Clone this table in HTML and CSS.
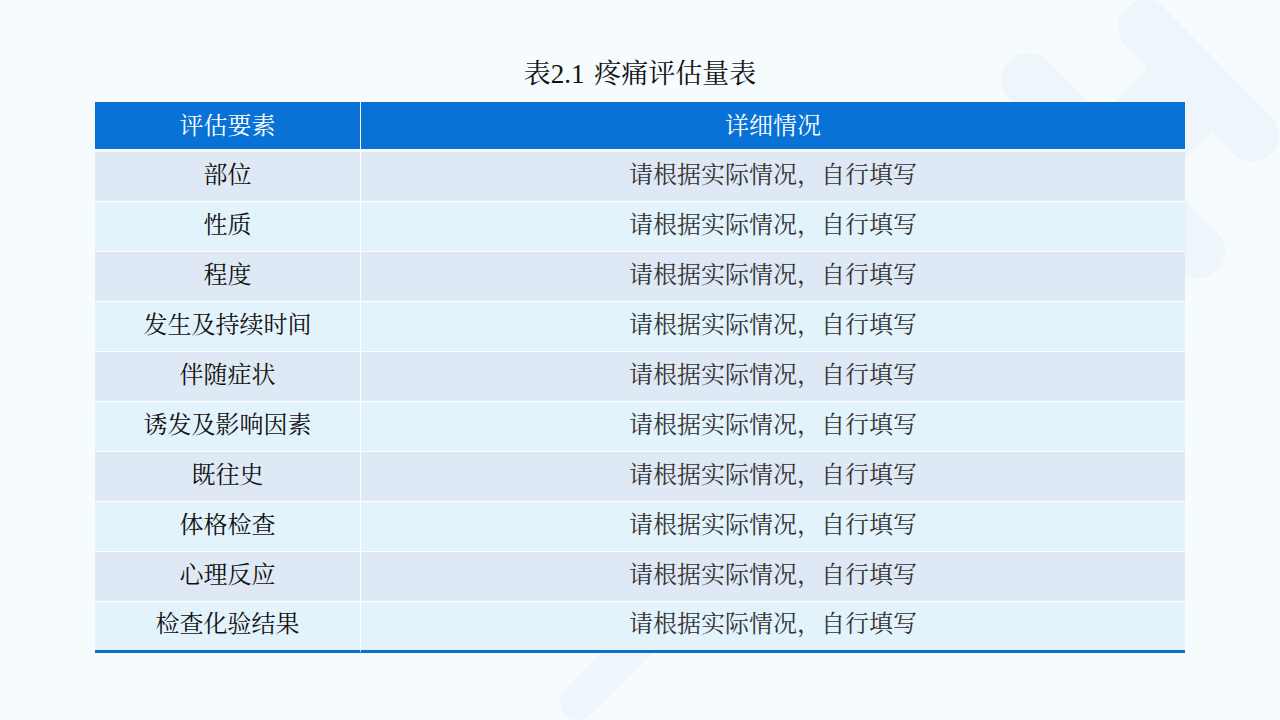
FILE: index.html
```html
<!DOCTYPE html>
<html lang="zh-CN">
<head>
<meta charset="utf-8">
<title>表2.1 疼痛评估量表</title>
<link rel="stylesheet" href="styles.css">
</head>
<body>
<div class="slide">
  <svg class="decor" width="1280" height="720" viewBox="0 0 1280 720" aria-hidden="true">
    <g stroke="#eef6fc" fill="none">
      <line x1="1145" y1="27" x2="1252" y2="135" stroke-width="54" stroke-linecap="round"/>
      <line x1="1028" y1="80" x2="1198" y2="251" stroke-width="54" stroke-linecap="round"/>
      <line x1="1199" y1="81" x2="1000" y2="280" stroke-width="90" stroke-linecap="butt"/>
      <line x1="1114" y1="166" x2="578" y2="702" stroke-width="36" stroke-linecap="round"/>
    </g>
  </svg>
  <main class="content">
    <h1 class="title">表2.1 疼痛评估量表</h1>
    <table class="grid">
      <thead>
        <tr><th class="c1">评估要素</th><th class="c2">详细情况</th></tr>
      </thead>
      <tbody>
        <tr class="odd"><td class="c1">部位</td><td class="c2">请根据实际情况，自行填写</td></tr>
        <tr class="even"><td class="c1">性质</td><td class="c2">请根据实际情况，自行填写</td></tr>
        <tr class="odd"><td class="c1">程度</td><td class="c2">请根据实际情况，自行填写</td></tr>
        <tr class="even"><td class="c1">发生及持续时间</td><td class="c2">请根据实际情况，自行填写</td></tr>
        <tr class="odd"><td class="c1">伴随症状</td><td class="c2">请根据实际情况，自行填写</td></tr>
        <tr class="even"><td class="c1">诱发及影响因素</td><td class="c2">请根据实际情况，自行填写</td></tr>
        <tr class="odd"><td class="c1">既往史</td><td class="c2">请根据实际情况，自行填写</td></tr>
        <tr class="even"><td class="c1">体格检查</td><td class="c2">请根据实际情况，自行填写</td></tr>
        <tr class="odd"><td class="c1">心理反应</td><td class="c2">请根据实际情况，自行填写</td></tr>
        <tr class="even last"><td class="c1">检查化验结果</td><td class="c2">请根据实际情况，自行填写</td></tr>
      </tbody>
    </table>
  </main>
</div>
</body>
</html>
```

FILE: styles.css
```css
html, body {
  margin: 0;
  padding: 0;
}
body {
  width: 1280px;
  height: 720px;
  overflow: hidden;
  background: #f6fbfe;
  font-family: "Liberation Serif", "Noto Serif CJK SC", "Noto Sans CJK SC", serif;
}
.slide {
  position: relative;
  width: 1280px;
  height: 720px;
}
.decor {
  position: absolute;
  left: 0;
  top: 0;
  z-index: 0;
}
.content {
  position: relative;
  z-index: 1;
  display: flex;
  flex-direction: column;
  align-items: center;
  padding-top: 54px;
}
.title {
  margin: 0 0 8px 0;
  height: 40px;
  line-height: 40px;
  font-size: 27px;
  font-weight: normal;
  color: #111;
  word-spacing: 3px;
}
.grid {
  width: 1090px;
  border-collapse: separate;
  border-spacing: 0;
  table-layout: fixed;
  font-size: 24px;
  line-height: 30px;
}
.grid th, .grid td {
  padding: 0;
  text-align: center;
  vertical-align: middle;
  font-weight: normal;
}
.grid th {
  height: 46px;
  padding-top: 1px;
  background: #0872d6;
  color: #fff;
  border-bottom: 3px solid #f4f9fd;
}
.grid th.c1, .grid td.c1 {
  width: 265px;
  border-right: 1px solid #ffffff;
}
.grid td {
  height: 45px;
  padding-bottom: 4px;
  border-bottom: 1px solid #ffffff;
}
.grid td.c1 {
  color: #111;
}
.grid td.c2 {
  color: #333;
}
.grid tr.odd td {
  background: #dfe9f5;
}
.grid tr.even td {
  background: #e3f3fb;
}
.grid tr.last td {
  height: 44px;
  border-bottom: 3px solid #0f6fca;
}
```
